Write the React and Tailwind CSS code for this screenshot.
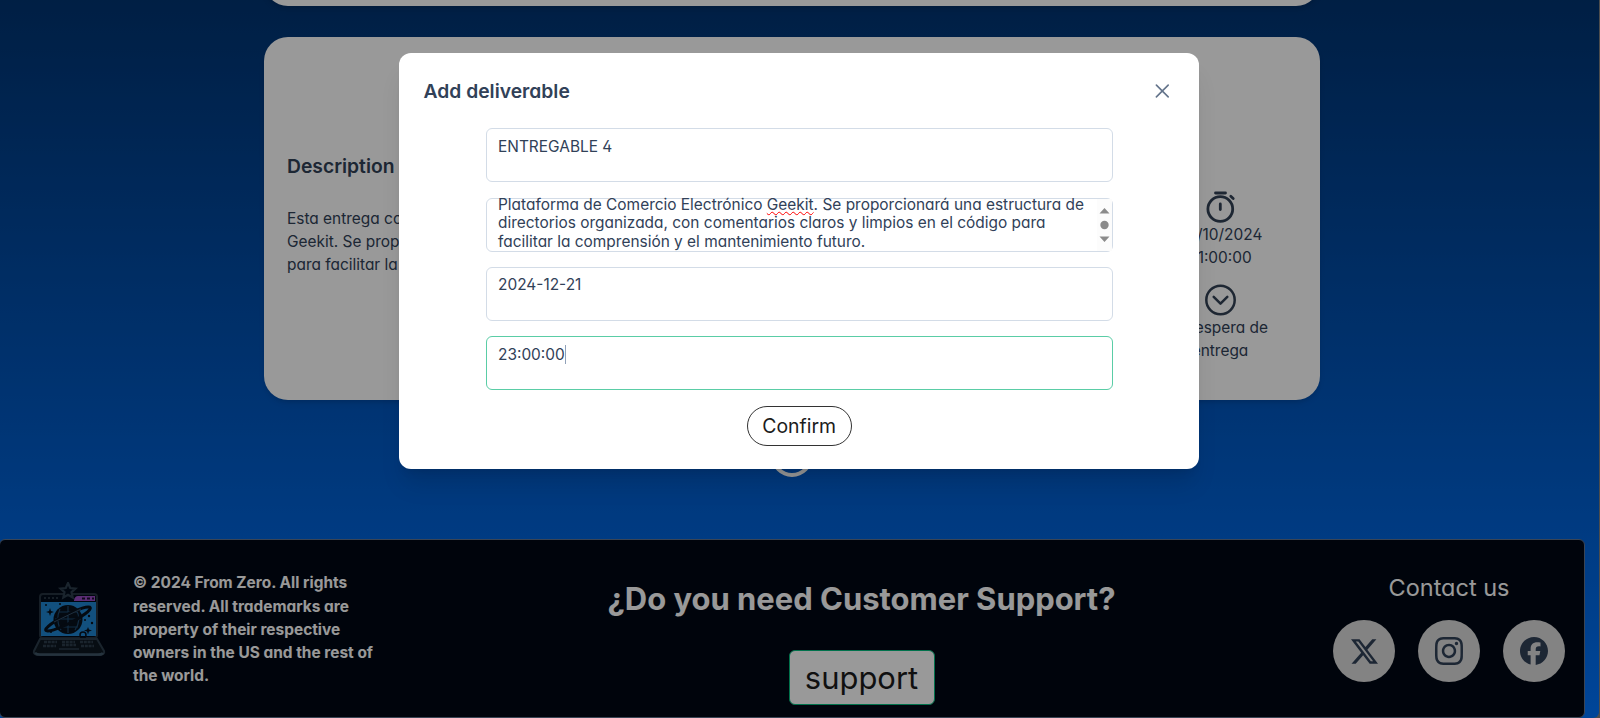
import React from "react";
import { FaInstagram, FaFacebook } from "react-icons/fa6";
import { BsTwitterX } from "react-icons/bs";

const font = "font-['Inter',sans-serif] [font-feature-settings:'cv02','cv03','cv04','cv11']";
const field =
  "h-[54px] w-[627px] rounded-md border px-[11.300px] pt-[7.300px] text-[15.450px] leading-[19px] text-slate-700 bg-white overflow-hidden";

function Laptop() {
  return (
    <svg viewBox="0 0 76 76" className="h-[76px] w-[76px]" fill="none">
      <rect x="9" y="12" width="57" height="44" rx="3" fill="#000b1a" stroke="#263340" strokeWidth="2" />
      <path d="M43 18q1-4 4-4h17v5H43z" fill="#9a4bc4" />
      <path d="M51 16.500h3M56 16.500h3M61 16.500h2" stroke="#1c1030" strokeWidth="2" />
      <path d="M13 16h14" stroke="#263340" strokeWidth="2" strokeDasharray="2 2" />
      <rect x="10" y="20" width="55" height="34" fill="#1f86d2" />
      <circle cx="37" cy="37.500" r="14.500" fill="#08111d" />
      <path d="M37 24v27M24 37h26M29 27q-5 11 1 21M45 27q6 11-1 21M28 30h18M27 45h20" stroke="#1d4a70" strokeWidth="1.200" />
      <ellipse cx="37" cy="37" rx="25" ry="4.500" transform="rotate(-27 37 37)" stroke="#08111d" strokeWidth="3" />
      <path d="M23 40l27-13" stroke="#34506a" strokeWidth="1" />
      <path d="M19 26l1 3 3 1-3 1-1 3-1-3-3-1 3-1zM57 45l1 2.500 3 1-3 1-1 3-1-3-3-1 3-1z" fill="#08111d" />
      <circle cx="52" cy="53" r="3" stroke="#08111d" strokeWidth="1.500" />
      <g fill="#08111d">
        <circle cx="15" cy="23" r="1" /><circle cx="29" cy="22" r="1" /><circle cx="58" cy="34" r="1.200" />
        <circle cx="54" cy="38" r="1" /><circle cx="61" cy="41" r="1.200" /><circle cx="15" cy="47" r="1.200" /><circle cx="20" cy="50" r="1" />
      </g>
      <path d="M37 1l2.200 5 5.300.6-4 3.600 1.200 5.300L37 12.700l-4.700 2.800 1.200-5.300-4-3.600 5.300-.6z" fill="#000b1a" stroke="#2c3d4c" strokeWidth="2.200" />
      <path d="M9 57h57l7 12q1 3-3 4H6q-4-1-3-4z" fill="#0c1620" stroke="#2c3d4c" strokeWidth="2" />
      <path d="M13 60h13M31 60h13M49 60h13M12 64h13M31 63h14M50 64h13" stroke="#2c3d4c" strokeWidth="2.500" strokeDasharray="3 0.8" />
      <path d="M28 67h20" stroke="#2c3d4c" strokeWidth="1.500" />
      <path d="M4 71q2 1.500 5 1.500h58q4 0 5-1.500" stroke="#3f5668" strokeWidth="2.500" />
    </svg>
  );
}

function Stopwatch() {
  return (
    <svg viewBox="0 0 32 32" className="h-8 w-8" fill="none" stroke="#334155" strokeWidth="2.800" strokeLinecap="round">
      <circle cx="16.300" cy="18" r="12.400" />
      <path d="M16.300 13v5.500M11.500 2h10M26.800 5.300l2.400 2.200" />
    </svg>
  );
}

function ChevronCircle() {
  return (
    <svg viewBox="0 0 32 32" className="h-8 w-8" fill="none" stroke="#334155" strokeWidth="2.500" strokeLinecap="round" strokeLinejoin="round">
      <circle cx="16.500" cy="16" r="14.200" />
      <path d="M9.700 12.800l6.800 6.800 6.800-6.800" />
    </svg>
  );
}

function Page() {
  return (
    <div className="flex h-[718px] w-[1599px] flex-col overflow-hidden rounded-br-md bg-linear-to-b from-[#003472] to-[#0074ff]">
      <div className="ml-[264px] h-[6px] w-[1056px] shrink-0 overflow-visible">
        <div className="-mt-[54px] h-[60px] rounded-3xl bg-white shadow-md" />
      </div>
      <section className="mt-[31px] ml-[264px] flex h-[363px] w-[1056px] shrink-0 justify-between rounded-3xl bg-white text-slate-700 shadow-md">
        <div className="ml-[23px] pt-[114px]">
          <h2 className="text-[19.300px] leading-[30px] font-semibold">Description</h2>
          <p className="mt-[26px] w-[700px] text-[15.450px] leading-[23.200px]">
            Esta entrega contiene el código fuente de la Plataforma de
            <br />
            Geekit. Se proporcionará una estructura de directorios organizada
            <br />
            para facilitar la comprensión y el mantenimiento futuro.
          </p>
        </div>
        <div className="mr-[40px] flex w-[120px] flex-col items-center pt-[154px] text-center text-[15.450px] leading-[23px]">
          <Stopwatch />
          <p className="whitespace-nowrap">30/10/2024</p>
          <p>21:00:00</p>
          <div className="mt-[15px]"><ChevronCircle /></div>
          <p className="whitespace-nowrap">En espera de</p>
          <p>entrega</p>
        </div>
      </section>
      <div className="mt-[35px] ml-[771px] h-[42px] w-[42px] shrink-0 rounded-full border-[4px] border-white" />
      <footer className="mt-[62px] -ml-px flex h-[179px] w-[1586px] shrink-0 rounded-md border border-slate-500 bg-[#000814] text-white">
        <div className="mt-[42px] ml-[31px]"><Laptop /></div>
        <p className="mt-[31.400px] ml-[26px] w-[260px] text-[15.450px] leading-[23.200px] font-bold whitespace-nowrap">
          © 2024 From Zero. All rights
          <br />
          reserved. All trademarks are
          <br />
          property of their respective
          <br />
          owners in the US and the rest of
          <br />
          the world.
        </p>
        <div className="ml-[213px] flex w-[511px] flex-col items-center">
          <h2 className="mt-[36px] text-[30.950px] leading-[46px] font-bold whitespace-nowrap">¿Do you need Customer Support?</h2>
          <button className="mt-[28px] h-[55px] w-[146px] rounded-md border border-emerald-500 bg-white text-[30.950px] leading-[46px] text-[#1c1c1c]">support</button>
        </div>
        <div className="ml-[216px] flex w-[232px] flex-col items-center">
          <h3 className="mt-[30px] text-[23.500px] leading-[35px] whitespace-nowrap">Contact us</h3>
          <div className="mt-[15px] flex gap-[23px] text-slate-700">
            <div className="flex size-[62px] items-center justify-center rounded-full bg-[#dadada]"><BsTwitterX size={27} /></div>
            <div className="flex size-[62px] items-center justify-center rounded-full bg-[#dadada]"><FaInstagram size={32} /></div>
            <div className="flex size-[62px] items-center justify-center rounded-full bg-[#dadada]"><FaFacebook size={28} /></div>
          </div>
        </div>
      </footer>
    </div>
  );
}

function Dialog() {
  return (
    <div className="flex h-[416.400px] w-[800.400px] flex-col rounded-xl bg-white shadow-xl">
      <header className="flex items-center justify-between px-[24.500px] pt-[20px]">
        <h1 className="text-[19.300px] leading-[36px] font-semibold text-slate-700">Add deliverable</h1>
        <svg viewBox="0 0 14 14" className="mr-[5px] size-[15px]" stroke="#64748b" strokeWidth="1.500" strokeLinecap="round">
          <path d="M1.300 1.000l11 11M12.300 1.000l-11 11" />
        </svg>
      </header>
      <div className="mt-[19.400px] flex flex-col items-center gap-[15.300px]">
        <div className={`${field} border-[#d3dce7]`}>ENTREGABLE 4</div>
        <div className="flex h-[54px] w-[627px] rounded-md border border-[#d3dce7] bg-white pl-[11.300px] text-[15.450px] leading-[18.600px] text-slate-700">
          <p className="-mt-[3.100px] min-w-0 grow whitespace-nowrap">
            Plataforma de Comercio Electrónico{" "}
            <span className="underline decoration-[#ff0000] decoration-wavy decoration-1 underline-offset-1">Geekit</span>. Se proporcionará una estructura de
            <br />
            directorios organizada, con comentarios claros y limpios en el código para
            <br />
            facilitar la comprensión y el mantenimiento futuro.
          </p>
          <svg viewBox="0 0 15 52" className="h-[52px] w-[15px] shrink-0" fill="#8b8b8b">
            <rect width="15" height="52" fill="#fcfcfc" />
            <path d="M7.500 9l5 5.500h-10zM7.500 43l5-5.500h-10z" />
            <circle cx="7.500" cy="26" r="4.200" />
          </svg>
        </div>
        <div className={`${field} border-[#d3dce7]`}>2024-12-21</div>
        <div className={`${field} border-[#5acda6]`}>
          <span className="-mr-px border-r border-slate-400">23:00:00</span>
        </div>
        <button className="h-[40px] w-[105px] rounded-[20px] border border-[#333] pt-px text-[19.400px] text-[#1c1c1c]">Confirm</button>
      </div>
    </div>
  );
}

export default function App() {
  return (
    <div className={`relative h-[718px] w-[1600px] overflow-hidden bg-[#808080] ${font}`}>
      <Page />
      <div className="absolute inset-0 bg-black/40 pt-[53px] pl-[399px]">
        <Dialog />
      </div>
    </div>
  );
}
